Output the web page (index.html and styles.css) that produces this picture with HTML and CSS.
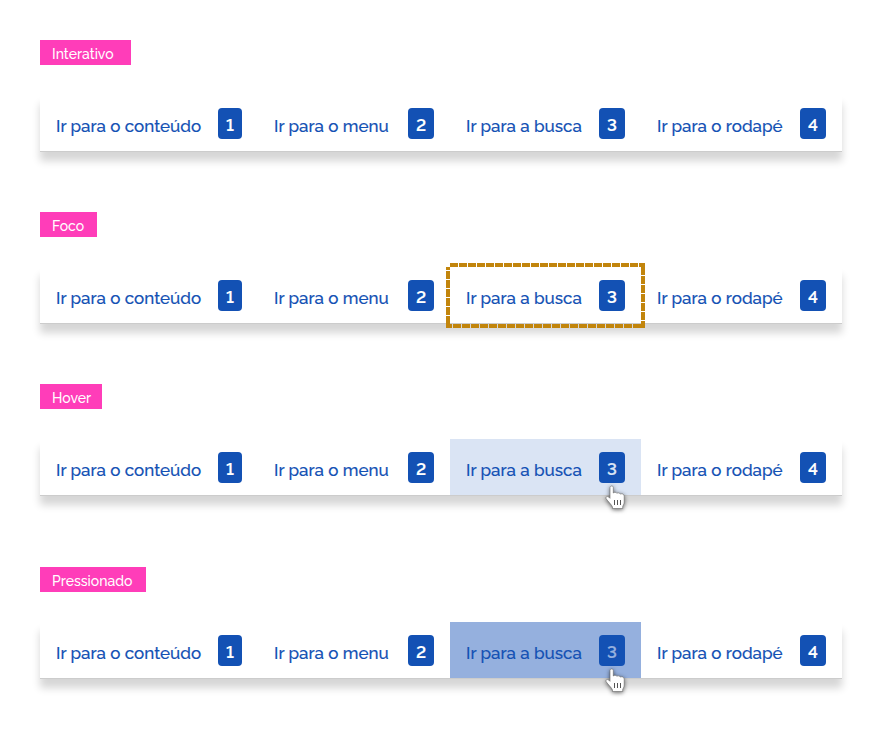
FILE: index.html
```
<!DOCTYPE html>
<html lang="pt-BR">
<head>
<meta charset="utf-8">
<title>Skiplink</title>
<link rel="stylesheet" href="styles.css">
</head>
<body>
<main>
  <section class="state">
    <h2 class="tag interactive"><span>Interativo</span></h2>
    <nav class="bar">
      <a class="item content"><span class="label">Ir para o conteúdo</span><span class="key">1</span></a>
      <a class="item menu"><span class="label">Ir para o menu</span><span class="key">2</span></a>
      <a class="item search"><span class="label">Ir para a busca</span><span class="key">3</span></a>
      <a class="item footer"><span class="label">Ir para o rodapé</span><span class="key">4</span></a>
    </nav>
  </section>
  <section class="state">
    <h2 class="tag focus"><span>Foco</span></h2>
    <nav class="bar">
      <a class="item content"><span class="label">Ir para o conteúdo</span><span class="key">1</span></a>
      <a class="item menu"><span class="label">Ir para o menu</span><span class="key">2</span></a>
      <a class="item search"><span class="label">Ir para a busca</span><span class="key">3</span>
        <svg class="ring" width="199" height="65" viewBox="0 0 199 65"><path d="M4 2H199M197 4V65M195 63H0M2 61V4"/></svg></a>
      <a class="item footer"><span class="label">Ir para o rodapé</span><span class="key">4</span></a>
    </nav>
  </section>
  <section class="state">
    <h2 class="tag hover"><span>Hover</span></h2>
    <nav class="bar">
      <a class="item content"><span class="label">Ir para o conteúdo</span><span class="key">1</span></a>
      <a class="item menu"><span class="label">Ir para o menu</span><span class="key">2</span></a>
      <a class="item search is-hover"><span class="label">Ir para a busca</span><span class="key">3</span>
        <svg class="cursor" width="21" height="25" viewBox="0 0 21 25"><path class="hand" d="M5 2.500c0-2 3.300-2 3.300 0V8c.7-1 3-1 3.500.3 1-.8 3-.5 3.500.8 1.700-.8 3.900 0 3.900 2V17c0 2-1 3-1.500 4.500V23.500H7.500V22C6.500 19.500 3 16.500 1.200 13.800c-1-2 1.200-3 2.800-1.500l1 1z"/><path class="fingers" d="M9.500 15v5M12.500 15v5M15.500 15v5"/></svg></a>
      <a class="item footer"><span class="label">Ir para o rodapé</span><span class="key">4</span></a>
    </nav>
  </section>
  <section class="state last">
    <h2 class="tag pressed"><span>Pressionado</span></h2>
    <nav class="bar">
      <a class="item content"><span class="label">Ir para o conteúdo</span><span class="key">1</span></a>
      <a class="item menu"><span class="label">Ir para o menu</span><span class="key">2</span></a>
      <a class="item search is-pressed"><span class="label">Ir para a busca</span><span class="key">3</span>
        <svg class="cursor" width="21" height="25" viewBox="0 0 21 25"><path class="hand" d="M5 2.500c0-2 3.300-2 3.300 0V8c.7-1 3-1 3.500.3 1-.8 3-.5 3.500.8 1.700-.8 3.900 0 3.900 2V17c0 2-1 3-1.500 4.500V23.500H7.500V22C6.500 19.500 3 16.500 1.200 13.800c-1-2 1.200-3 2.800-1.500l1 1z"/><path class="fingers" d="M9.500 15v5M12.500 15v5M15.500 15v5"/></svg></a>
      <a class="item footer"><span class="label">Ir para o rodapé</span><span class="key">4</span></a>
    </nav>
  </section>
</main>
</body>
</html>
```
FILE: styles.css
```
* { box-sizing: border-box; }
body { margin: 0; background: #fff; font-family: Raleway, Lato, "Open Sans", sans-serif; }
main { padding: 40px; }
.state { height: 172px; }
.last { margin-top: 11px; height: 120px; }
.tag { margin: 0 0 30px; height: 25px; padding-left: 12px; background: #ff3db9; color: #fff; font-size: 14px; line-height: 28px; font-weight: 500; white-space: nowrap; }
.interactive { width: 91px; }
.focus { width: 57px; }
.hover { width: 62px; }
.pressed { width: 106px; }
.bar { display: flex; width: 802px; height: 57px; background: #fff; border-bottom: 1px solid #ccc; box-shadow: 0 9px 8px rgba(0, 0, 0, .165); }
.item { position: relative; display: flex; align-items: center; justify-content: space-between; height: 56px; padding: 0 16px; color: #1351b4; }
.content { width: 218px; }
.menu { width: 192px; }
.search { width: 191px; }
.footer { width: 201px; }
.label { padding-top: 6px; font-size: 16.98px; line-height: 20px; font-weight: 500; white-space: nowrap; -webkit-text-stroke: .15px; }
.key { width: 26px; height: 31px; margin-top: 1px; border-radius: 4px; background: #1351b4; color: #fff; font-size: 17px; line-height: 35px; font-weight: 600; font-variant-numeric: lining-nums; text-align: center; -webkit-text-stroke: .15px; }
.content .key { width: 24px; }
.is-hover { background: #dae4f4; }
.is-hover .key { color: #dae4f4; }
.is-pressed { background: #95b0de; }
.is-pressed .key { color: #95b0de; }
.ring { position: absolute; left: -4px; top: -4px; }
.ring path { fill: none; stroke: #c2850c; stroke-width: 4; stroke-dasharray: 8 1; }
.cursor { position: absolute; left: 155px; top: 46px; overflow: visible; filter: drop-shadow(0 1px 2px rgba(0, 0, 0, .6)); }
.hand { fill: #fff; stroke: #666; stroke-width: .6; }
.fingers { fill: none; stroke: #555; stroke-width: 1; }
```
